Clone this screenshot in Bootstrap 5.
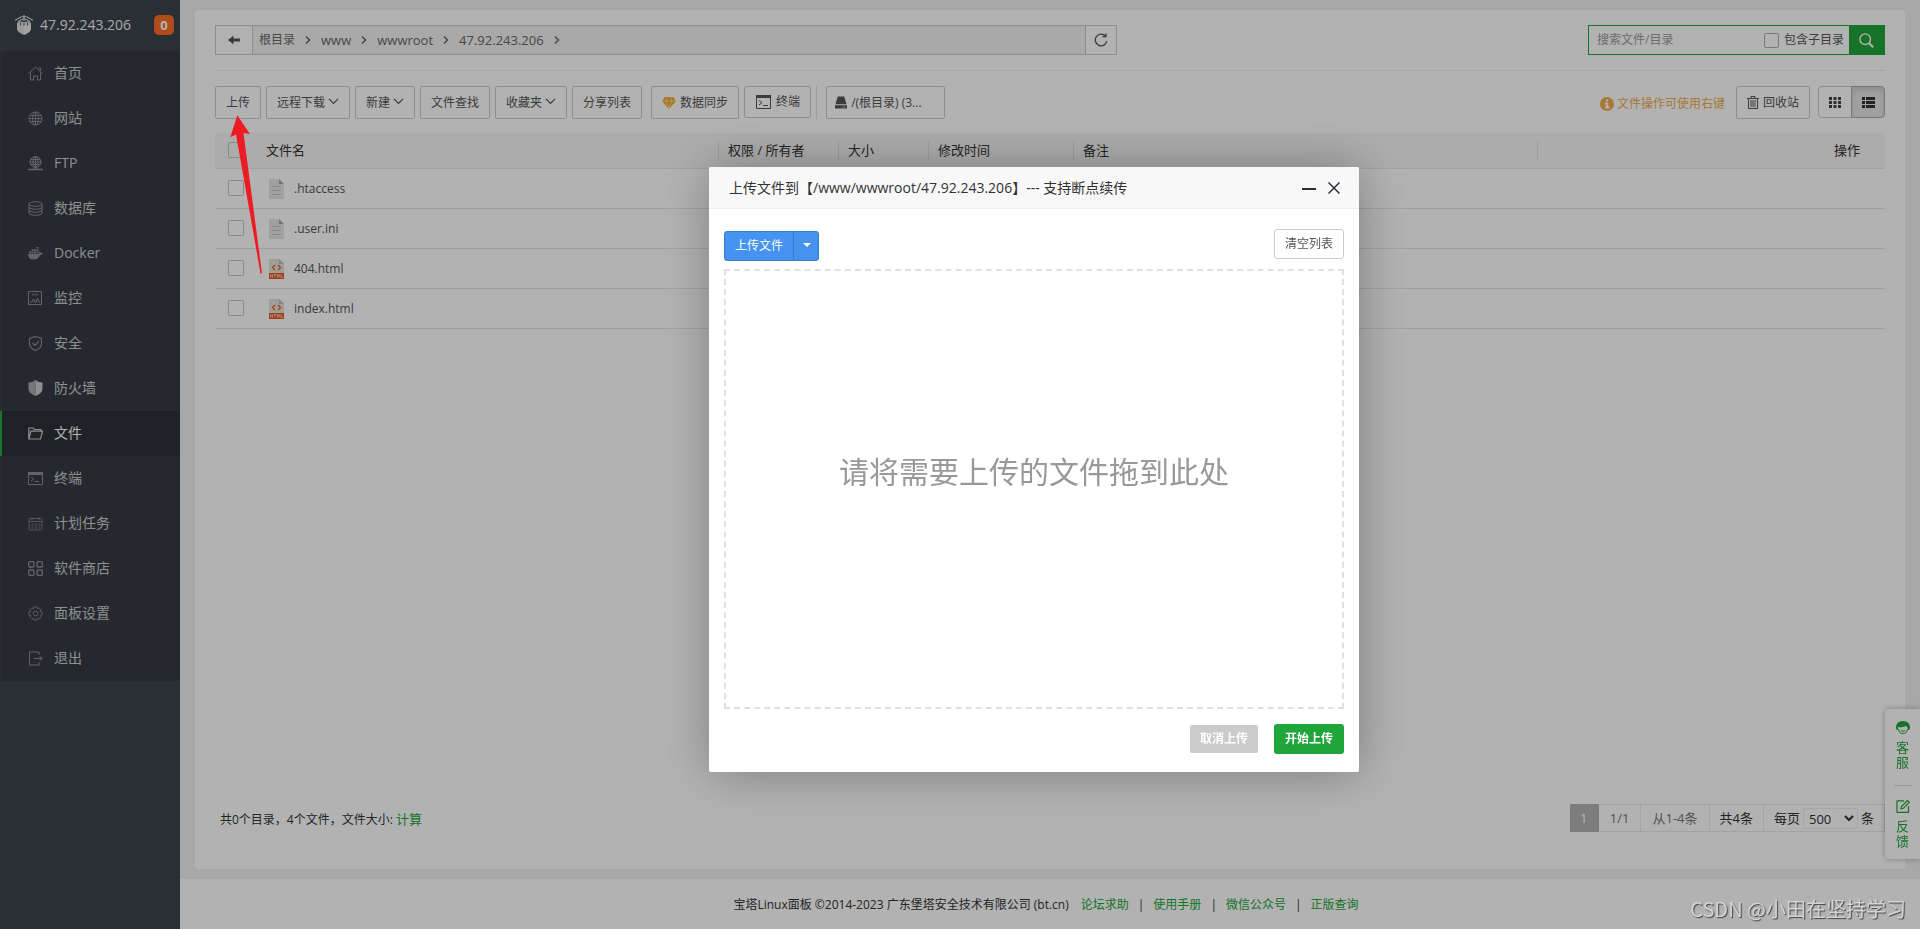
<!DOCTYPE html>
<html lang="zh-CN">
<head>
<meta charset="utf-8">
<meta name="viewport" content="width=device-width, initial-scale=1">
<title>宝塔Linux面板</title>
<link rel="stylesheet" href="https://cdn.jsdelivr.net/npm/bootstrap@5.3.0/dist/css/bootstrap.min.css">
<style>
  :root { --bt-green: #20a53a; }
  body { font-family: "Open Sans", "Noto Sans CJK SC", sans-serif; font-size: 12px; line-height: 18px; color: #333; background: #f1f1f1; }
  a { color: var(--bt-green); text-decoration: none; }
  svg { display: block; flex: none; }
  .ln { fill: none; stroke: currentColor; }

  /* sidebar */
  .side-col { width: 180px; background: #3c444d; }
  .side-head { height: 51px; padding: 0 6px 2px 15px; gap: 7px; font-size: 14px; color: #f0f0f0; }
  .side-head .msg-count { width: 20px; height: 20px; border-radius: 5px; background: #fc6d26; font-size: 13px; line-height: 20px; padding: 0; }
  .side-menu .nav-link { height: 45px; padding: 0 0 1px 26px; border-left: 2px solid #3a3f42; background: #353c44; color: #ccc; font-size: 14px; gap: 11px; border-radius: 0; }
  .side-menu .nav-link svg { color: #8d9094; }
  .side-menu .nav-link.active { background: #2c3138; border-left-color: var(--bt-green); color: #fff; }
  .side-menu .nav-link.active svg { color: #ccc; }

  /* file panel */
  .panel { margin: 10px 15px; padding: 15px 20px 37px; background: #fff; border-radius: 4px; }
  .path-bar { width: 54%; height: 30px; border: 1px solid #ccc; background: #f3f3f3; }
  .path-bar button { border: 0; background: #fff; color: #555; padding: 0; }
  .path-bar .path-back { width: 37px; border-right: 1px solid #ccc; }
  .path-bar .path-reload { width: 31px; border-left: 1px solid #ccc; }
  .crumbs { padding-left: 6px; font-size: 13px; }
  .crumbs a { color: #666; }
  .crumbs .zh { font-size: 12px; }
  .crumbs svg { margin: 0 10px; color: #666; }
  .find-box { width: 297px; height: 30px; border: 1px solid var(--bt-green); }
  .find-box input[type=text] { border: 0; padding: 0 8px; font-size: 12px; background: transparent; min-width: 0; outline: 0; }
  .find-box input::placeholder { color: #999; opacity: 1; }
  .find-box label { color: #555; gap: 5px; margin-right: 5px; }
  .find-box button { width: 35px; border: 0; background: var(--bt-green); color: #fff; }
  .tick { appearance: none; width: 16px; height: 16px; margin: 0; border: 1px solid #c4c4c4; border-radius: 2px; background: transparent; display: block; flex: none; }
  .find-box .tick { width: 15px; height: 15px; border-color: #aaa; }
  .rule { height: 1px; margin: 15px 0; background: #eee; }

  .btn-tool { --bs-btn-font-size: 12px; --bs-btn-line-height: 18px; --bs-btn-padding-x: 10px; --bs-btn-padding-y: 0; --bs-btn-border-radius: 2px; --bs-btn-border-color: #ccc; --bs-btn-color: #555; height: 33px; display: inline-flex; align-items: center; justify-content: center; background: #fff; white-space: nowrap; }
  .btn-tool.short { height: 32px; }
  .btn-tool.disk { width: 119px; justify-content: flex-start; --bs-btn-padding-x: 8px; }
  .btn-tool .caret-line { margin-left: 3px; margin-bottom: 2px; }
  .gap-tool { gap: 5px; }
  .tip { color: #f0ad4e; gap: 3px; margin-right: 11px; padding-top: 2px; }
  .view-switch .btn { --bs-btn-padding-x: 0; width: 34px; --bs-btn-border-radius: 4px; color: #444; }
  .view-switch .btn.on { background: #e6e6e6; border-color: #adadad; box-shadow: inset 0 3px 5px rgba(0,0,0,.125); color: #333; }

  .files { margin: 14px 0 0; table-layout: fixed; width: 100%; font-size: 12px; }
  .files th { height: 35px; padding: 0 10px; font-size: 13px; font-weight: 400; background: #f6f6f6; border-bottom: 1px solid #e8e8e8; position: relative; color: #333; }
  .files th.sep::before { content: ""; position: absolute; left: 0; top: 8px; height: 20px; border-left: 1px solid #e2e2e2; }
  .files td { height: 40px; padding: 0; border-bottom: 1px solid #e6e6e6; color: #555; }
  .files .pick { width: 51px; padding: 0 0 0 13px; }
  .files th.fname { width: 452px; padding: 0; }
  .files .c-perm { width: 120px; }
  .files .c-size { width: 90px; }
  .files .c-time { width: 145px; }
  .files .c-act { width: 348px; padding-right: 25px; }
  .files td .fname-in { gap: 10px; padding: 2px 0 0 3px; }
  .stats { padding: 2px 0 0 5px; }
  .stats a { font-size: 13px; }

  .pager { font-size: 13px; height: 28px; }
  .pager > * { border: 1px solid #eaeaea; border-left: 0; display: flex; align-items: center; justify-content: center; padding: 0 10px; }
  .pager .cur { background: #b4b4b4; border-color: #b4b4b4; color: #fff; width: 29px; padding: 0; }
  .pager .dim { color: #777; padding: 0 11px; }
  .pager select { width: 55px; height: 21px; margin: 0 3px; padding: 0 0 1px 1px; font-size: 13px; border: 1px solid #eee; border-radius: 2px; background: #fff; color: #333; }

  .foot { height: 50px; background: #fff; padding: 2px 8px 0 0; }
  .foot .bar { margin: 0 9px; }

  /* help tab on the right edge */
  .help-tab { position: fixed; right: 0; bottom: 70px; width: 35px; height: 150px; background: #fff; border-radius: 4px 0 0 4px; box-shadow: 0 0 6px rgba(0,0,0,.3); color: var(--bt-green); font-size: 13px; line-height: 15px; padding: 12px 0 10px; }
  .help-tab a { width: 13px; gap: 6px; }
  .help-tab hr { width: 18px; margin: 0; border-color: #ddd; opacity: 1; }

  .shade { background: rgba(0,0,0,.3); z-index: 1040; }

  /* upload window */
  .up-win { position: fixed; top: 167px; left: calc(50% - 251px); width: 650px; z-index: 1050; background: #fff; border-radius: 2px; box-shadow: 1px 1px 50px rgba(0,0,0,.3); }
  .up-head { height: 42px; padding: 0 19px 0 20px; background: #f8f8f8; border-bottom: 1px solid #eee; font-size: 14px; border-radius: 2px 2px 0 0; }
  .up-head button { border: 0; background: none; padding: 0; color: #2e2d3c; }
  .up-body { padding: 20px 15px 18px; }
  .btn-sm12 { --bs-btn-font-size: 12px; --bs-btn-line-height: 18px; --bs-btn-padding-x: 0; --bs-btn-padding-y: 0; --bs-btn-border-radius: 3px; height: 30px; width: 70px; }
  .up-split { margin-top: 2px; }
  .btn-blue { --bs-btn-bg: #4692f0; --bs-btn-color: #fff; --bs-btn-border-color: #357ebd; }
  .btn-blue.dropdown-toggle-split { width: 26px; font-size: 14px; }
  .btn-plain { --bs-btn-color: #555; --bs-btn-border-color: #ccc; }
  .btn-go { --bs-btn-bg: var(--bt-green); --bs-btn-color: #fff; --bs-btn-font-weight: 700; }
  .btn-stop { --bs-btn-disabled-bg: #cbcbcb; --bs-btn-disabled-color: #fff; --bs-btn-disabled-opacity: 1; --bs-btn-font-weight: 700; }
  .drop-zone { height: 440px; margin: 8px 0 15px; border: 2px dashed #e0e0e0; color: #999; font-size: 30px; padding-bottom: 34px; }
  .up-actions { gap: 15px; }

  .pointer { position: fixed; left: 228px; top: 113px; z-index: 1060; pointer-events: none; }
  .credit { position: fixed; right: 14px; bottom: 6px; z-index: 1060; font-family: "Noto Sans CJK SC", sans-serif; font-size: 20px; line-height: 28px; color: #d4d4d4; text-shadow: 1px 1px 1px #444; white-space: nowrap; }
</style>
<script src="https://cdn.jsdelivr.net/npm/bootstrap@5.3.0/dist/js/bootstrap.bundle.min.js"></script>
</head>
<body>
<div class="d-flex min-vh-100">

  <aside class="side-col flex-shrink-0">
    <div class="side-head d-flex align-items-center">
      <svg width="18" height="20" viewBox="0 0 18 20"><path fill="#ddd" d="M2 8l3-1.500 4 .5 4-.5L16 8v6q0 3-7 6-7-3-7-6z"/><path fill="#fff" opacity=".4" d="M9 10h7v4q0 3-7 6z"/><path fill="none" stroke="#ddd" stroke-width="1.200" d="M0 5.500Q5 1.500 9 1.500t9 4M3 7Q6 4 9 4t6 3M9 0v6"/><path stroke="#3c444d" stroke-width=".8" d="M5.500 7.500v3M9 7.500v3M12.500 7.500v3"/></svg>
      <span class="me-auto">47.92.243.206</span>
      <span class="badge msg-count">0</span>
    </div>
    <nav class="side-menu nav flex-column">
      <a class="nav-link d-flex align-items-center" href="#"><svg width="15" height="15" viewBox="0 0 15 15"><path class="ln" d="M.5 7.500l7-6.500 7 6.500M2.500 6.500v7.500h3v-4h4v4h3V6.500M10.500 2h2v2.500"/></svg>首页</a>
      <a class="nav-link d-flex align-items-center" href="#"><svg width="15" height="15" viewBox="0 0 15 15"><g class="ln" stroke-width=".9"><circle cx="7.500" cy="7.500" r="6.500"/><ellipse cx="7.500" cy="7.500" rx="3" ry="6.500"/><path d="M1 7.500h13M2 4.500h11M2 10.500h11M7.500 1v13"/></g></svg>网站</a>
      <a class="nav-link d-flex align-items-center" href="#"><svg width="15" height="15" viewBox="0 0 15 15"><g class="ln"><circle cx="7.500" cy="6" r="5.500"/><ellipse cx="7.500" cy="6" rx="2.500" ry="5.500"/><path d="M2 6h11M3 3.500h9M3 8.500h9M7.500 0v12"/><path stroke-width="1.500" d="M0 13.500h15M5.500 13h4"/></g></svg>FTP</a>
      <a class="nav-link d-flex align-items-center" href="#"><svg width="15" height="15" viewBox="0 0 15 15"><g class="ln"><ellipse cx="7.500" cy="3" rx="6.500" ry="2.300"/><path d="M1 3v9c0 3 13 3 13 0V3M1 6c0 3 13 3 13 0M1 9c0 3 13 3 13 0"/></g></svg>数据库</a>
      <a class="nav-link d-flex align-items-center" href="#"><svg width="15" height="15" viewBox="0 0 15 15"><path fill="currentColor" d="M0 8h11l.3-2.500q1.500.3 1.500 1.500l2.200.3q-.5 1.500-3 1.700-1.500 4.500-6.500 4.500Q0 13.500 0 8zM1 5.500h2v2H1zM3.500 5.500h2v2h-2zM6 5.500h2v2H6zM8.500 5.500h2v2h-2zM3.500 3.200h2v1.800h-2zM6 3.200h2v1.800H6zM8.500 3.200h2v1.800h-2zM8.500 1h2v1.600h-2z"/></svg>Docker</a>
      <a class="nav-link d-flex align-items-center" href="#"><svg width="15" height="15" viewBox="0 0 15 15"><path class="ln" d="M.5.5h13v13H.5zM2 11h2l1.500-3 2 4 2-5 1 4h2"/><path fill="currentColor" opacity=".5" d="M4 2.500h6v2H4z"/></svg>监控</a>
      <a class="nav-link d-flex align-items-center" href="#"><svg width="15" height="15" viewBox="0 0 15 15"><path class="ln" stroke-width="1.200" d="M7.500.5l6 2v5q0 4.500-6 7-6-2.500-6-7v-5zM4.500 7l2.500 2.500 4-4.500"/></svg>安全</a>
      <a class="nav-link d-flex align-items-center" href="#"><svg width="15" height="16" viewBox="0 0 15 16"><path fill="#aaa" d="M7.500 0v16Q.5 13 .5 8.500V2.500q4 0 7-2.500z"/><path fill="#ccc" d="M7.500 0v16q7-3 7-7.500V2.500q-4 0-7-2.500z"/></svg>防火墙</a>
      <a class="nav-link active d-flex align-items-center" href="#" aria-current="page"><svg width="15" height="15" viewBox="0 0 15 15"><path class="ln" stroke-width="1.200" d="M.8 13V2h4.400l1 1.500h6.600V5.200M.8 13L3 5.200h11.500L12.500 13z"/></svg>文件</a>
      <a class="nav-link d-flex align-items-center" href="#"><svg width="15" height="15" viewBox="0 0 15 15"><path class="ln" d="M.5 1.500h14v12H.5zM3 6l2.500 2L3 10M7 10.500h4"/><path fill="currentColor" d="M0 1h15v3H0z"/></svg>终端</a>
      <a class="nav-link d-flex align-items-center" href="#"><svg width="15" height="15" viewBox="0 0 15 15"><g class="ln" opacity=".75"><rect x="1" y="2.500" width="13" height="11.500" rx="1.500"/><path d="M1 5.500h13M4 1v3M11 1v3"/><path stroke-dasharray="2 1.500" d="M3.500 8h9M3.500 10h9M3.500 12h9"/></g></svg>计划任务</a>
      <a class="nav-link d-flex align-items-center" href="#"><svg width="15" height="15" viewBox="0 0 15 15"><g class="ln" stroke-width="1.300"><rect x=".7" y=".7" width="5.300" height="5.300" rx="1"/><rect x="9" y=".7" width="5.300" height="5.300" rx="1"/><rect x=".7" y="9" width="5.300" height="5.300" rx="1"/><rect x="9" y="9" width="5.300" height="5.300" rx="1"/></g></svg>软件商店</a>
      <a class="nav-link d-flex align-items-center" href="#"><svg width="15" height="15" viewBox="0 0 15 15"><g class="ln" opacity=".85"><circle cx="7.500" cy="7.500" r="2.300"/><path d="M6 .8h3l.4 2 1.700-1 2 2-1 1.700 2 .5v3l-2 .5 1 1.700-2 2-1.700-1-.4 2H6l-.4-2-1.700 1-2-2 1-1.700-2-.5V6l2-.5-1-1.700 2-2 1.700 1z"/></g></svg>面板设置</a>
      <a class="nav-link d-flex align-items-center" href="#"><svg width="15" height="15" viewBox="0 0 15 15"><path class="ln" d="M11 4V1H1.500v13H11v-3M6 7.500h8M11.500 5L14 7.500 11.500 10"/></svg>退出</a>
    </nav>
  </aside>

  <div class="d-flex flex-column flex-grow-1">
    <main class="panel d-flex flex-column flex-grow-1">
      <div class="d-flex justify-content-between">
        <div class="path-bar d-flex">
          <button type="button" class="path-back d-flex align-items-center justify-content-center" aria-label="返回上级"><svg width="12" height="10" viewBox="0 0 12 10"><path fill="currentColor" d="M0 5l5.500-4.500v3H12v3H5.500v3z"/></svg></button>
          <nav class="crumbs d-flex align-items-center flex-grow-1">
            <a href="#" class="zh">根目录</a><svg width="6" height="8" viewBox="0 0 6 8"><path class="ln" stroke-width="1.500" d="M1 .5L4.500 4 1 7.500"/></svg>
            <a href="#">www</a><svg width="6" height="8" viewBox="0 0 6 8"><path class="ln" stroke-width="1.500" d="M1 .5L4.500 4 1 7.500"/></svg>
            <a href="#">wwwroot</a><svg width="6" height="8" viewBox="0 0 6 8"><path class="ln" stroke-width="1.500" d="M1 .5L4.500 4 1 7.500"/></svg>
            <a href="#">47.92.243.206</a><svg width="6" height="8" viewBox="0 0 6 8"><path class="ln" stroke-width="1.500" d="M1 .5L4.500 4 1 7.500"/></svg>
          </nav>
          <button type="button" class="path-reload d-flex align-items-center justify-content-center" aria-label="刷新"><svg width="14" height="14" viewBox="0 0 14 14"><path class="ln" stroke-width="1.300" d="M11.500 3.200A5.800 5.800 0 1 0 12.800 8M12 .5v3.200H8.500"/></svg></button>
        </div>
        <form class="find-box d-flex">
          <input type="text" class="flex-grow-1" placeholder="搜索文件/目录" aria-label="搜索文件/目录">
          <label class="d-flex align-items-center flex-shrink-0"><input type="checkbox" class="tick">包含子目录</label>
          <button type="button" class="d-flex align-items-center justify-content-center flex-shrink-0 p-0" aria-label="搜索"><svg width="15" height="15" viewBox="0 0 15 15"><circle class="ln" stroke-width="1.400" cx="6.200" cy="6.200" r="5.300"/><path class="ln" stroke-width="2" d="M10 10l4.200 4.200"/></svg></button>
        </form>
      </div>
      <div class="rule"></div>
      <div class="d-flex justify-content-between">
        <div class="d-flex gap-tool">
          <button type="button" class="btn btn-tool">上传</button>
          <button type="button" class="btn btn-tool">远程下载<svg class="caret-line" width="11" height="7" viewBox="0 0 11 7"><path class="ln" stroke-width="1.200" d="M1 .8L5.500 5.500 10 .8"/></svg></button>
          <button type="button" class="btn btn-tool">新建<svg class="caret-line" width="11" height="7" viewBox="0 0 11 7"><path class="ln" stroke-width="1.200" d="M1 .8L5.500 5.500 10 .8"/></svg></button>
          <button type="button" class="btn btn-tool">文件查找</button>
          <button type="button" class="btn btn-tool">收藏夹<svg class="caret-line" width="11" height="7" viewBox="0 0 11 7"><path class="ln" stroke-width="1.200" d="M1 .8L5.500 5.500 10 .8"/></svg></button>
          <button type="button" class="btn btn-tool">分享列表</button>
          <button type="button" class="btn btn-tool ms-1"><svg class="me-1" width="14" height="12" viewBox="0 0 14 12"><path fill="#f5a623" d="M3 0h8l3 4-7 8-7-8z"/><path stroke="#fff" stroke-width=".6" fill="none" d="M0 4h14M4 4l3 7 3-7M4 4l1.500-4M10 4L8.500 0"/></svg>数据同步</button>
          <button type="button" class="btn btn-tool short"><svg class="me-1" width="17" height="14" viewBox="0 0 17 14"><path class="ln" d="M1.500.5h14v13h-14zM4 5.500l3 2.200-3 2.300M8 10.500h5"/><path fill="currentColor" d="M1 0h15v3H1z"/></svg>终端</button>
          <div class="border-start me-1"></div>
          <button type="button" class="btn btn-tool disk"><svg class="me-1" width="12" height="13" viewBox="0 0 13 13"><path fill="currentColor" d="M3 0h7l2.500 8.500H.5zM0 9.500h13V13H0z"/><path stroke="#fff" d="M8 11.500h1M10 11.500h1"/></svg>/(根目录) (3...</button>
        </div>
        <div class="d-flex">
          <div class="tip d-flex align-items-center"><svg width="14" height="14" viewBox="0 0 14 14"><circle cx="7" cy="7" r="7" fill="currentColor"/><path stroke="#fff" stroke-width="2" d="M7 2.500v2M5 6.500h2.200v4M5 10.500h4.500" fill="none"/></svg>文件操作可使用右键</div>
          <button type="button" class="btn btn-tool me-2"><svg class="me-1" width="12" height="13" viewBox="0 0 12 13"><path class="ln" d="M0 2.500h12M4 2V.5h4V2M1.500 3v9.500h9V3M4 4v7M6 4v7M8 4v7"/></svg>回收站</button>
          <div class="btn-group view-switch">
            <button type="button" class="btn btn-tool short" aria-label="图标视图"><svg width="12" height="11" viewBox="0 0 12 11"><path fill="currentColor" d="M0 0h3v3H0zM4.500 0h3v3h-3zM9 0h3v3H9zM0 4h3v3H0zM4.500 4h3v3h-3zM9 4h3v3H9zM0 8h3v3H0zM4.500 8h3v3h-3zM9 8h3v3H9z"/></svg></button>
            <button type="button" class="btn btn-tool short on" aria-label="列表视图"><svg width="13" height="11" viewBox="0 0 13 11"><path fill="currentColor" d="M0 0h3v3H0zM4 0h9v3H4zM0 4h3v3H0zM4 4h9v3H4zM0 8h3v3H0zM4 8h9v3H4z"/></svg></button>
          </div>
        </div>
      </div>

      <table class="files">
        <thead>
          <tr><th class="pick"><input type="checkbox" class="tick" aria-label="全选"></th><th class="fname">文件名</th><th class="sep c-perm">权限 / 所有者</th><th class="sep c-size">大小</th><th class="sep c-time">修改时间</th><th class="sep">备注</th><th class="sep c-act text-end">操作</th></tr>
        </thead>
        <tbody>
          <tr><td class="pick"><input type="checkbox" class="tick" aria-label=".htaccess"></td><td><div class="fname-in d-flex align-items-center"><svg width="15" height="20" viewBox="0 0 15 20"><path fill="#e6e6e6" d="M0 0h10l5 5v15H0z"/><path fill="#aaa" d="M10 0l5 5h-5z"/><path stroke="#c4c4c4" d="M3 7.500h9M3 11.500h9M3 15.500h9"/></svg>.htaccess</div></td><td></td><td></td><td></td><td></td><td></td></tr>
          <tr><td class="pick"><input type="checkbox" class="tick" aria-label=".user.ini"></td><td><div class="fname-in d-flex align-items-center"><svg width="15" height="20" viewBox="0 0 15 20"><path fill="#e6e6e6" d="M0 0h10l5 5v15H0z"/><path fill="#aaa" d="M10 0l5 5h-5z"/><path stroke="#c4c4c4" d="M3 7.500h9M3 11.500h9M3 15.500h9"/></svg>.user.ini</div></td><td></td><td></td><td></td><td></td><td></td></tr>
          <tr><td class="pick"><input type="checkbox" class="tick" aria-label="404.html"></td><td><div class="fname-in d-flex align-items-center"><svg width="15" height="20" viewBox="0 0 15 20"><path fill="#e6e4d8" d="M0 0h10l5 5v15H0z"/><path fill="#bdbbae" d="M10 0l5 5h-5z"/><path fill="#e55b26" d="M0 14h15v6H0z"/><path fill="none" stroke="#e55b26" stroke-width="1.200" d="M6 6L3.500 8.500 6 11M9 6l2.500 2.500L9 11"/><path fill="none" stroke="#fff" stroke-width=".6" d="M1.500 15.500v3M3.500 15.500v3M1.500 17h2M4.500 15.500h3M6 15.500v3M8.500 18.500v-3l1.200 2 1.200-2v3M12.200 15.500v3h1.800"/></svg>404.html</div></td><td></td><td></td><td></td><td></td><td></td></tr>
          <tr><td class="pick"><input type="checkbox" class="tick" aria-label="index.html"></td><td><div class="fname-in d-flex align-items-center"><svg width="15" height="20" viewBox="0 0 15 20"><path fill="#e6e4d8" d="M0 0h10l5 5v15H0z"/><path fill="#bdbbae" d="M10 0l5 5h-5z"/><path fill="#e55b26" d="M0 14h15v6H0z"/><path fill="none" stroke="#e55b26" stroke-width="1.200" d="M6 6L3.500 8.500 6 11M9 6l2.500 2.500L9 11"/><path fill="none" stroke="#fff" stroke-width=".6" d="M1.500 15.500v3M3.500 15.500v3M1.500 17h2M4.500 15.500h3M6 15.500v3M8.500 18.500v-3l1.200 2 1.200-2v3M12.200 15.500v3h1.800"/></svg>index.html</div></td><td></td><td></td><td></td><td></td><td></td></tr>
        </tbody>
      </table>

      <div class="d-flex justify-content-between align-items-center mt-auto">
        <div class="stats">共0个目录，4个文件，文件大小: <a href="#">计算</a></div>
        <div class="pager d-flex">
          <span class="cur">1</span><span class="dim">1/1</span><span class="dim">从1-4条</span><span>共4条</span>
          <label>每页<select aria-label="每页条数"><option>500</option></select>条</label>
        </div>
      </div>
    </main>
    <footer class="foot d-flex align-items-center justify-content-center">
      <span class="me-2 pe-1">宝塔Linux面板 ©2014-2023 广东堡塔安全技术有限公司 (bt.cn)</span>
      <a href="#">论坛求助</a><span class="bar">|</span><a href="#">使用手册</a><span class="bar">|</span><a href="#">微信公众号</a><span class="bar">|</span><a href="#">正版查询</a>
    </footer>
  </div>
</div>

<div class="help-tab d-flex flex-column align-items-center justify-content-between">
  <a href="#" class="d-flex flex-column align-items-center"><svg width="14" height="13" viewBox="0 0 14 13"><path fill="currentColor" d="M0 7Q0 0 7 0t7 7q0 2-2 2 0-3-2-4-4 2-8 1v3Q0 9 0 7z"/><path class="ln" d="M2.500 8q.5 4.500 4.500 4.500T11.500 8M5 9.500q2 1.500 4 0"/></svg>客服</a>
  <hr>
  <a href="#" class="d-flex flex-column align-items-center"><svg width="14" height="13" viewBox="0 0 14 13"><path class="ln" stroke-width="1.200" d="M8 .8H1v11.500h11.500V6M5 8.800l.5-2.300 6-6 1.800 1.800-6 6z"/></svg>反馈</a>
</div>

<div class="shade position-fixed top-0 start-0 w-100 h-100"></div>

<section class="up-win" role="dialog" aria-labelledby="upTitle">
  <header class="up-head d-flex align-items-center">
    <span id="upTitle" class="me-auto">上传文件到【/www/wwwroot/47.92.243.206】--- 支持断点续传</span>
    <button type="button" class="me-2 pe-1" aria-label="最小化"><svg width="14" height="12" viewBox="0 0 14 12"><path stroke="currentColor" stroke-width="2" d="M0 7h14"/></svg></button>
    <button type="button" aria-label="关闭"><svg width="12" height="12" viewBox="0 0 12 12"><path class="ln" stroke-width="1.500" d="M.5.5l11 11M11.500.5l-11 11"/></svg></button>
  </header>
  <div class="up-body">
    <div class="d-flex justify-content-between align-items-start">
      <div class="btn-group up-split">
        <button type="button" class="btn btn-sm12 btn-blue">上传文件</button>
        <button type="button" class="btn btn-sm12 btn-blue dropdown-toggle dropdown-toggle-split" aria-label="更多上传方式"></button>
      </div>
      <button type="button" class="btn btn-sm12 btn-plain">清空列表</button>
    </div>
    <div class="drop-zone d-flex align-items-center justify-content-center">请将需要上传的文件拖到此处</div>
    <div class="up-actions d-flex justify-content-end">
      <button type="button" class="btn btn-sm12 btn-stop" disabled>取消上传</button>
      <button type="button" class="btn btn-sm12 btn-go">开始上传</button>
    </div>
  </div>
</section>

<svg class="pointer" width="36" height="164" viewBox="0 0 36 164"><path fill="#ed1c24" d="M9.300 2.300L22 21l-6.500-1L34 160.500h-1.500L8 21.500l-5.700 2.800z"/></svg>
<div class="credit">CSDN @小田在坚持学习</div>
</body>
</html>
